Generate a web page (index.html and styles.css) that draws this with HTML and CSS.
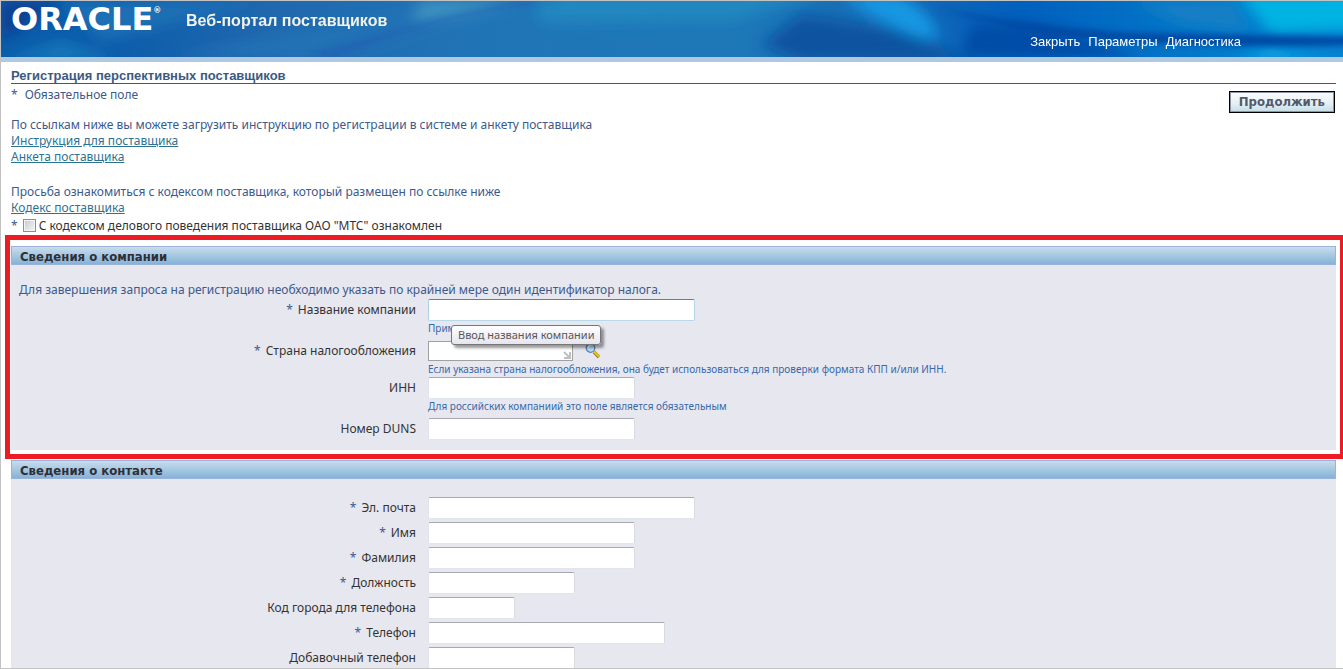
FILE: index.html
```html
<!DOCTYPE html>
<html lang="ru">
<head>
<meta charset="UTF-8">
<meta name="viewport" content="width=device-width, initial-scale=1.0">
<title>Веб-портал поставщиков</title>

<link rel="stylesheet" href="styles.css">
</head>

<body>

<div class="page">

<header class="header">
<svg class="header-bg" viewBox="0 0 1342 56" preserveAspectRatio="none" aria-hidden="true">
<defs>
<linearGradient id="base" x1="0" x2="1" y1="0" y2="0">
<stop offset="0" stop-color="#0b5cab"/>
<stop offset=".08" stop-color="#0c5cab"/>
<stop offset=".2" stop-color="#2068ae"/>
<stop offset=".35" stop-color="#2074b6"/>
<stop offset=".55" stop-color="#1d78b8"/>
<stop offset=".66" stop-color="#1669b4"/>
<stop offset=".76" stop-color="#0160bd"/>
<stop offset=".9" stop-color="#0379ca"/>
<stop offset="1" stop-color="#0583d2"/>
</linearGradient>
<filter id="soft" x="-20%" y="-50%" width="140%" height="200%"><feGaussianBlur stdDeviation="7"/></filter>
<filter id="fine" x="-20%" y="-50%" width="140%" height="200%"><feGaussianBlur stdDeviation="3"/></filter>
</defs>
<rect width="1342" height="56" fill="url(#base)"/>
<g filter="url(#soft)">
<path d="M0 0H60L0 40Z" fill="#0a3f92"/>
<path d="M60 0H260L100 40Z" fill="#1a6fb5"/>
<path d="M0 60L60 40L120 60Z" fill="#1377ba"/>
<path d="M170 56L420 8L500 0L400 40L330 56Z" fill="#2272b6"/>
<path d="M420 0H530L450 18L410 20Z" fill="#3c92c0"/>
<path d="M530 -10H830L730 20L540 22Z" fill="#2487bf"/>
<path d="M760 44L800 14L900 30L970 60H800Z" fill="#0a53a0"/>
<path d="M840 -6H900Q935 15 938 38L915 36Q870 18 840 -6Z" fill="#1397e2"/>
<path d="M970 24L1040 26L1140 56H960Z" fill="#014ba6"/>
<path d="M1130 0H1230L1250 30L1180 22Z" fill="#127fc4"/>
<path d="M1236 -8H1360V28L1270 32Z" fill="#04b4e2"/>
<path d="M1230 60L1270 46L1330 60Z" fill="#0ba6e4"/>
</g>
<g filter="url(#fine)">
<path d="M330 60Q430 14 560 0H520Q430 18 310 52Z" fill="#2362b3" opacity=".8"/>
<path d="M940 8Q1040 28 1130 32L1360 36V44Q1200 48 1070 36Q990 24 940 8Z" fill="#0147a0"/>
</g>
</svg>
<div class="logo">ORACLE<sup>®</sup></div>
<div class="app-name">Веб-портал поставщиков</div>
<nav class="nav">
<a href="#">Закрыть</a>
<a href="#">Параметры</a>
<a href="#">Диагностика</a>
</nav>
</header>

<main class="content">

<h1>Регистрация перспективных поставщиков</h1>

<div class="top-row">
<div class="required-note"><span class="star">*</span>Обязательное поле</div>
<button class="btn" type="submit" form="supplier">Продолжить</button>
</div>

<div class="links">
<p>По ссылкам ниже вы можете загрузить инструкцию по регистрации в системе и анкету поставщика</p>
<a href="#">Инструкция для поставщика</a>
<a href="#">Анкета поставщика</a>
</div>

<div class="links code-links">
<p>Просьба ознакомиться с кодексом поставщика, который размещен по ссылке ниже</p>
<a href="#">Кодекс поставщика</a>
</div>

<form id="supplier">

<div class="agree">
<span class="star">*</span>
<input type="checkbox" id="agree">
<label for="agree">С кодексом делового поведения поставщика ОАО "МТС" ознакомлен</label>
</div>

<div class="highlight">
<section class="panel company">
<h2>Сведения о компании</h2>
<div class="panel-body">
<p class="intro">Для завершения запроса на регистрацию необходимо указать по крайней мере один идентификатор налога.</p>

<div class="row">
<label for="company"><span class="star">*</span>Название компании</label>
<div class="field">
<input class="w-xl active" type="text" id="company">
<div class="hint">Прим</div>
<div class="tooltip">Ввод названия компании</div>
</div>
</div>

<div class="row">
<label for="country"><span class="star">*</span>Страна налогообложения</label>
<div class="field">
<div class="lov">
<div class="lov-box">
<input class="lov-input" type="text" id="country">
<svg class="lov-mark" viewBox="0 0 8 8" aria-hidden="true"><path d="M1 1L6 6M7 1V7H1" fill="none" stroke="#bfbfbf" stroke-width="2"/></svg>
</div>
<button class="lov-btn" type="button" aria-label="Поиск">
<svg viewBox="0 0 16 16" aria-hidden="true">
<path d="M9 9L14 14" stroke="#8a6b1c" stroke-width="3.4"/>
<path d="M9 8.6L14.2 13.6" stroke="#e8c51c" stroke-width="2.4"/>
<circle cx="5.5" cy="5" r="4.3" fill="#b9dcf7" stroke="#5a7fae" stroke-width="1.2"/>
<path d="M3 5Q3.4 2.8 5.6 2.4" fill="none" stroke="#fff" stroke-width="1.2"/>
</svg>
</button>
</div>
<div class="hint">Если указана страна налогообложения, она будет использоваться для проверки формата КПП и/или ИНН.</div>
</div>
</div>

<div class="row tight">
<label for="inn">ИНН</label>
<div class="field">
<input class="w-l" type="text" id="inn">
<div class="hint">Для российских компаниий это поле является обязательным</div>
</div>
</div>

<div class="row">
<label for="duns">Номер DUNS</label>
<div class="field"><input class="w-l" type="text" id="duns"></div>
</div>
</div>
</section>
</div>

<section class="panel contact">
<h2>Сведения о контакте</h2>
<div class="panel-body">
<div class="row">
<label for="email"><span class="star">*</span>Эл. почта</label>
<div class="field"><input class="w-xl" type="text" id="email"></div>
</div>
<div class="row">
<label for="name"><span class="star">*</span>Имя</label>
<div class="field"><input class="w-l" type="text" id="name"></div>
</div>
<div class="row">
<label for="surname"><span class="star">*</span>Фамилия</label>
<div class="field"><input class="w-l" type="text" id="surname"></div>
</div>
<div class="row">
<label for="position"><span class="star">*</span>Должность</label>
<div class="field"><input class="w-m" type="text" id="position"></div>
</div>
<div class="row">
<label for="area">Код города для телефона</label>
<div class="field"><input class="w-s" type="text" id="area"></div>
</div>
<div class="row">
<label for="phone"><span class="star">*</span>Телефон</label>
<div class="field"><input class="w-phone" type="text" id="phone"></div>
</div>
<div class="row">
<label for="ext">Добавочный телефон</label>
<div class="field"><input class="w-m" type="text" id="ext"></div>
</div>
</div>
</section>

</form>

</main>

</div>

</body>
</html>
```

FILE: styles.css
```css
*{box-sizing:border-box;}

body{
margin:0;
background:#fff;
color:#333;
font-family:Tahoma,"Noto Sans",sans-serif;
font-size:12px;
line-height:16px;
}

h1,h2,p{
margin:0;
}

.page{
height:100vh;
overflow:hidden;
border:solid #c3c3c3;
border-width:1px 0 1px 1px;
}

/* header */

.header{
position:relative;
display:flex;
height:61px;
padding-left:10px;
border-bottom:5px solid #b0c8e0;
color:#fff;
font-family:Arial,"Liberation Sans",sans-serif;
}

.header-bg{
position:absolute;
inset:0;
width:100%;
height:100%;
}

.logo{
position:relative;
width:175px;
padding-top:2px;
font-family:"DejaVu Sans",sans-serif;
font-size:32px;
font-weight:bold;
line-height:32px;
}

.logo sup{
font-size:8px;
line-height:8px;
vertical-align:17px;
}

.app-name{
position:relative;
flex:1;
padding-top:10px;
color:#f2f2e6;
font-size:16px;
font-weight:bold;
line-height:20px;
}

.nav{
position:relative;
display:flex;
gap:8px;
padding:33px 102px 0 0;
}

.nav a{
color:#fff;
font-size:13px;
text-decoration:none;
}

/* top of the page */

.content{
padding:6px 7px 0 10px;
}

h1{
border-bottom:1px solid #3c5a82;
color:#3c5a82;
font-family:Arial,"Liberation Sans",sans-serif;
font-size:13px;
line-height:15px;
}

.top-row{
display:flex;
justify-content:space-between;
height:33px;
padding-top:3px;
color:#3c5a8c;
}

.star{
margin-right:5px;
color:#3c5a8c;
}

.required-note .star{
margin-right:7px;
}

.btn{
align-self:flex-start;
height:22px;
margin:4px 1px 0 0;
padding:0 9px;
border:1px solid #000;
box-shadow:inset 0 0 0 1px #8a96a3;
background:linear-gradient(#fdfdfd,#e8f0f3 55%,#c4dde6);
color:#4f5a6e;
font-family:"DejaVu Sans Condensed",sans-serif;
font-size:13px;
font-weight:bold;
line-height:18px;
}

.links{
display:flex;
flex-direction:column;
align-items:flex-start;
color:#3c5a8c;
}

.links a{
color:#2b7391;
}

.code-links{
margin-top:19px;
}

.agree{
display:flex;
align-items:center;
height:19px;
}

.agree input{
appearance:none;
width:13px;
height:13px;
margin:0 3px 0 0;
border:1px solid #8e8f8f;
box-shadow:inset 0 0 0 1px #f4f4f4;
background:linear-gradient(135deg,#c5cad2,#f6f6f6);
}

/* panels */

.highlight{
margin:0 -7px 1px -6px;
padding:6px 4px 4px 1px;
border:5px solid #ed1c24;
border-right-width:3px;
}

.panel{
background:#e7e7f0;
}

h2{
height:19px;
padding-left:8px;
border:1px solid #9ab3d9;
background:linear-gradient(#c9dcec,#84b3d8);
color:#2f2f35;
font-family:"DejaVu Sans Condensed",sans-serif;
font-size:13px;
line-height:19px;
}

.panel-body{
padding:17px 0 10px;
}

.intro{
padding-left:8px;
color:#3c5a8c;
}

.row{
display:flex;
gap:12px;
}

.row label{
width:405px;
padding-top:3px;
text-align:right;
}

.company .row{
margin-top:5px;
}

.company .intro + .row,
.company .tight{
margin-top:1px;
}

.contact .panel-body{
display:flex;
flex-direction:column;
gap:3px;
padding-top:18px;
}

.field{
position:relative;
flex:1;
}

.field input{
display:block;
height:22px;
padding:0 4px;
border:1px solid;
border-color:#a8a8b2 #d8dbe0 #e1e6ec #dfe2f1;
border-radius:2px;
outline:none;
background:#fff;
font:inherit;
}

.field .active{
border-color:#4a86b8 #b5d4e6 #b7d9ea #b0d0e6;
}

.w-s{width:87px;}
.w-m{width:147px;}
.w-l{width:207px;}
.w-phone{width:237px;}
.w-xl{width:267px;}

.hint{
color:#3869a8;
font-size:10px;
line-height:14px;
}

.lov{
display:flex;
align-items:center;
gap:12px;
height:22px;
}

.lov-box{
position:relative;
}

.field .lov-input{
width:145px;
height:20px;
border-color:#a0a0a0;
border-radius:0;
}

.lov-mark{
position:absolute;
right:2px;
bottom:2px;
width:8px;
height:8px;
}

.lov-btn{
width:16px;
height:16px;
padding:0;
border:none;
background:none;
cursor:pointer;
}

.lov-btn svg{
display:block;
}

.tooltip{
position:absolute;
top:26px;
left:23px;
z-index:1;
padding:1px 6px;
border:1px solid #767676;
border-radius:3px;
box-shadow:3px 3px 3px rgba(0,0,0,.4);
background:linear-gradient(#fff,#e4e5f0);
color:#575757;
font-size:11px;
line-height:16px;
white-space:nowrap;
}
```
